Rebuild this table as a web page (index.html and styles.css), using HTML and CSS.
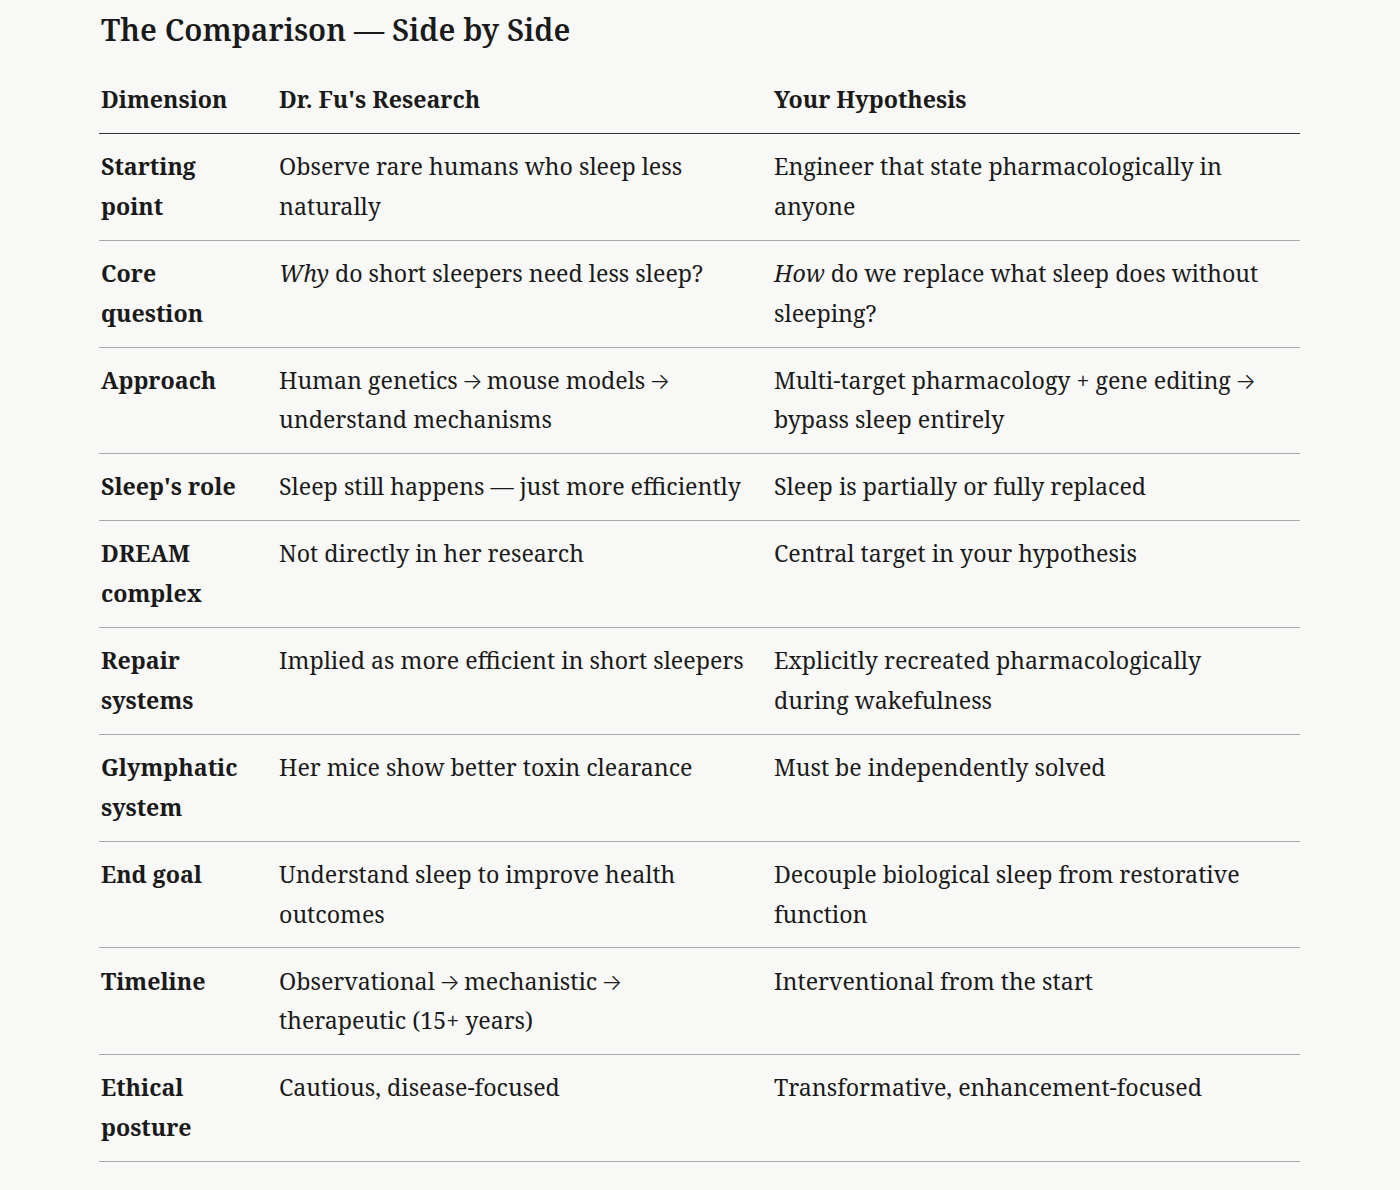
FILE: index.html
```html
<!DOCTYPE html>
<html lang="en">
<head>
<meta charset="utf-8">
<title>The Comparison — Side by Side</title>
<link rel="stylesheet" href="styles.css">
</head>
<body>
<main class="page">
  <h2 class="title">The Comparison — Side by Side</h2>
  <table class="cmp">
    <colgroup>
      <col class="c1"><col class="c2"><col class="c3">
    </colgroup>
    <thead>
      <tr><th>Dimension</th><th>Dr. Fu's Research</th><th>Your Hypothesis</th></tr>
    </thead>
    <tbody>
      <tr><th>Starting point</th><td>Observe rare humans who sleep less naturally</td><td>Engineer that state pharmacologically in anyone</td></tr>
      <tr><th>Core question</th><td><em>Why</em> do short sleepers need less sleep?</td><td><em>How</em> do we replace what sleep does without sleeping?</td></tr>
      <tr><th>Approach</th><td>Human genetics <span class="arr">→</span> mouse models <span class="arr">→</span> understand mechanisms</td><td>Multi-target pharmacology + gene editing <span class="arr">→</span> bypass sleep entirely</td></tr>
      <tr><th>Sleep's role</th><td>Sleep still happens — just more efficiently</td><td>Sleep is partially or fully replaced</td></tr>
      <tr><th>DREAM complex</th><td>Not directly in her research</td><td>Central target in your hypothesis</td></tr>
      <tr><th>Repair systems</th><td>Implied as more efficient in short sleepers</td><td>Explicitly recreated pharmacologically during wakefulness</td></tr>
      <tr><th>Glymphatic system</th><td>Her mice show better toxin clearance</td><td>Must be independently solved</td></tr>
      <tr><th>End goal</th><td>Understand sleep to improve health outcomes</td><td>Decouple biological sleep from restorative function</td></tr>
      <tr><th>Timeline</th><td>Observational <span class="arr">→</span> mechanistic <span class="arr">→</span> therapeutic (15+ years)</td><td>Interventional from the start</td></tr>
      <tr><th>Ethical posture</th><td>Cautious, disease-focused</td><td>Transformative, enhancement-focused</td></tr>
    </tbody>
  </table>
</main>
</body>
</html>
```
FILE: styles.css
```css
html, body {
  margin: 0;
  padding: 0;
  background: #f8f8f6;
}
body {
  font-family: "Noto Serif", "Liberation Serif", serif;
  color: #1a1a1a;
}
.page {
  padding: 10px 0 0 99px;
  width: 1201px;
}
.title {
  margin: 0 0 17px 2px;
  font-size: 30.2px;
  line-height: 40px;
  font-weight: 600;
  letter-spacing: 0;
}
.cmp {
  width: 1201px;
  border-collapse: collapse;
  table-layout: fixed;
  font-size: 23.2px;
  line-height: 39.8px;
}
.c1 { width: 178px; }
.c2 { width: 495px; }
.c3 { width: 528px; }
.cmp th, .cmp td {
  text-align: left;
  vertical-align: top;
  padding: 13.1px 22px 13.1px 2px;
}
.cmp th {
  font-weight: 700;
}
.cmp thead th {
  border-bottom: 1px solid #333;
}
.cmp tbody tr {
  border-bottom: 1px solid #a9a9a9;
}
.cmp em {
  font-style: italic;
}
.arr {
  font-family: Inter, "DejaVu Sans", sans-serif;
  font-weight: 300;
  font-size: 22px;
  line-height: 1;
  margin: 0 -2px;
}
```
